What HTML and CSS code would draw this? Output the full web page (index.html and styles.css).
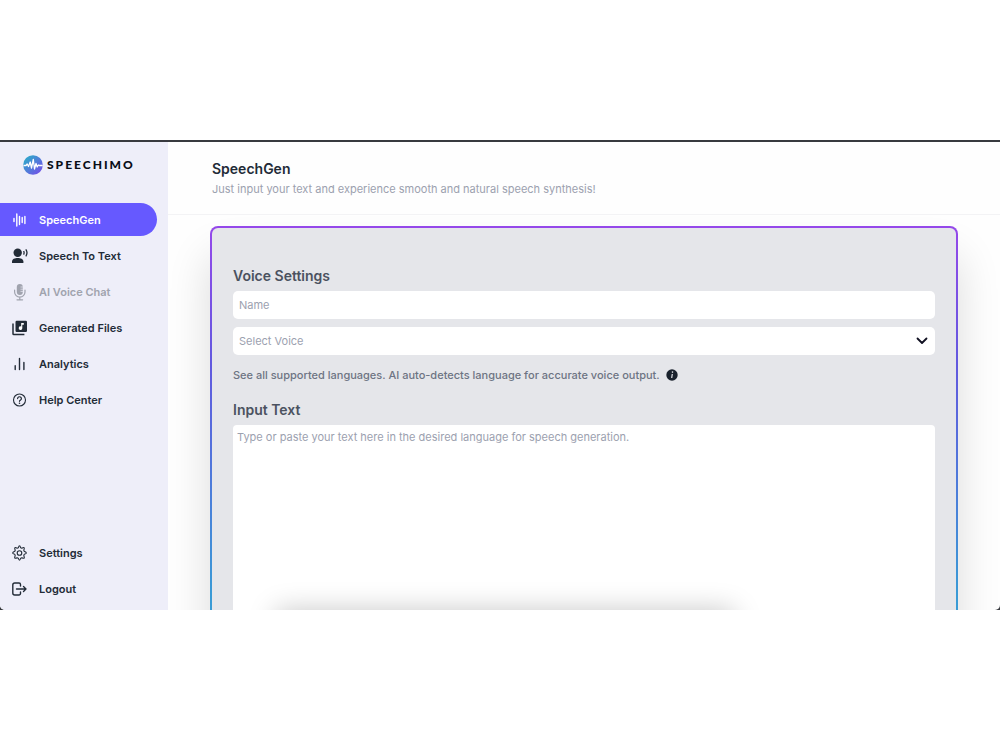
FILE: index.html
```
<!DOCTYPE html>
<html lang="en">
<head>
    <meta charset="utf-8">
    <title>Speechimo - SpeechGen</title>
    <link rel="stylesheet" href="styles.css">
</head>
<body>
<div class="window">
    <div class="app">
        <aside class="sidebar">
            <a class="logo" href="#">
                <svg width="20" height="20" viewBox="0 0 20 20">
                    <defs>
                        <linearGradient id="logo-fill" x1="0" y1="0" x2="1" y2="1">
                            <stop offset="0.2" stop-color="#35a0cd"/>
                            <stop offset="0.9" stop-color="#7250e8"/>
                        </linearGradient>
                    </defs>
                    <circle cx="10" cy="10" r="9.8" fill="url(#logo-fill)"/>
                    <path d="M0.5 10.5H3l1.200-1.500 1.300 2.500L7.200 7l1.300 6L10.300 4.500l1.200 9.500 1.500-5.500 1.200 3.500 1.200-2 .8.500h3.500" fill="none" stroke="#fff" stroke-width="1.300" stroke-linejoin="round"/>
                </svg>
                <span>SPEECHIMO</span>
            </a>
            <nav class="menu">
                <a class="item active" href="#">
                    <svg width="16" height="16" viewBox="0 0 16 16" fill="none" stroke="currentColor" stroke-width="1.4" stroke-linecap="round">
                        <path d="M2 6.500v3M4.800 2v12M7.500 4.500v8M10.200 5.500v5M12.900 4.500v7"/>
                    </svg>
                    SpeechGen
                </a>
                <a class="item" href="#">
                    <svg width="16" height="16" viewBox="0 0 16 16" fill="currentColor">
                        <circle cx="5.700" cy="4.700" r="4.200"/>
                        <path d="M0 15v-1.500c0-2.500 3-3.500 5.700-3.500s5.700 1 5.700 3.500V15z"/>
                        <path d="M11.600 3q1 1.800 0 3.600M13.800 1.300q2.400 3.500 0 7" fill="none" stroke="currentColor" stroke-width="1.300"/>
                    </svg>
                    Speech To Text
                </a>
                <a class="item disabled" href="#">
                    <svg width="16" height="18" viewBox="0 0 16 18">
                        <rect x="4.800" y="1" width="6" height="11" rx="3" fill="currentColor"/>
                        <path d="M8.500 4H11M8.500 6.200H11M8.500 8.400H11" stroke="#eeeef9" stroke-width=".7"/>
                        <path d="M2.600 7v2a5.200 5.200 0 0 0 10.400 0V7M7.800 14.200v2.600M5 16.800h5.600" fill="none" stroke="currentColor" stroke-width="1.200" stroke-linecap="round"/>
                    </svg>
                    AI Voice Chat
                </a>
                <a class="item" href="#">
                    <svg width="16" height="16" viewBox="0 0 16 16">
                        <rect x="3.500" y=".8" width="11.500" height="11.200" rx="1.200" fill="currentColor"/>
                        <path d="M1 3.500v10.200q0 .8.800.8h10.600" fill="none" stroke="currentColor" stroke-width="1.500"/>
                        <path d="M9.200 3h2.600v1.700h-1.500v3.500a1.800 1.800 0 1 1-1.100-1.700z" fill="#fff"/>
                    </svg>
                    Generated Files
                </a>
                <a class="item" href="#">
                    <svg width="16" height="16" viewBox="0 0 16 16" fill="none" stroke="currentColor" stroke-width="1.400" stroke-linecap="round">
                        <path d="M3.200 9.800v3.700M7.500 2.500v11M11.900 6.500v7"/>
                    </svg>
                    Analytics
                </a>
                <a class="item" href="#">
                    <svg width="16" height="16" viewBox="0 0 16 16" fill="none" stroke="currentColor">
                        <circle cx="7.500" cy="8" r="6" stroke-width="1.100"/>
                        <path d="M5.600 6.600a1.900 1.800 0 1 1 2.900 1.500q-1 .5-1 1.200" stroke-width="1.200" stroke-linecap="round"/>
                        <circle cx="7.500" cy="11.200" r=".8" fill="currentColor" stroke="none"/>
                    </svg>
                    Help Center
                </a>
            </nav>
            <nav class="menu menu-bottom">
                <a class="item" href="#">
                    <svg width="16" height="16" viewBox="0 0 16 16" fill="none" stroke="currentColor" stroke-width="1.100" stroke-linejoin="round">
                        <path d="M6.300 2.800Q7.500 -1.200 8.700 2.800L9.800 3.200Q13.400 1.200 11.800 5.200L12.200 6.300Q16.500 8 12.200 9.300L11.800 10.700Q13.600 14.300 9.800 12.700L8.700 13.200Q7.500 17.200 6.300 13.200L5.200 12.700Q1.400 14.300 3.200 10.700L2.800 9.300Q-1.500 8 2.800 6.300L3.200 5.200Q1.600 1.200 5.200 3.200z"/>
                        <circle cx="7.500" cy="8" r="2.300"/>
                    </svg>
                    Settings
                </a>
                <a class="item" href="#">
                    <svg width="16" height="16" viewBox="0 0 16 16" fill="none" stroke="currentColor" stroke-width="1.400" stroke-linejoin="round" stroke-linecap="round">
                        <path d="M8.500 5V3.500A1.500 1.500 0 0 0 7 2H2.700Q.8 2 .8 4v8q0 2 1.900 2H7a1.500 1.500 0 0 0 1.500-1.500V11M4.500 8H14M11.500 5.500L14 8l-2.500 2.500"/>
                    </svg>
                    Logout
                </a>
            </nav>
        </aside>
        <main class="content">
            <header class="page-header">
                <h1>SpeechGen</h1>
                <p>Just input your text and experience smooth and natural speech synthesis!</p>
            </header>
            <form class="card">
                <h2><label for="name">Voice Settings</label></h2>
                <input class="field" type="text" id="name" placeholder="Name">
                <div class="select">
                    <select class="field" aria-label="Select Voice">
                        <option>Select Voice</option>
                    </select>
                    <svg width="12" height="8" viewBox="0 0 12 8" fill="none" stroke="#111122" stroke-width="1.800" stroke-linecap="round" stroke-linejoin="round">
                        <path d="M1.500 1.500L6 6l4.500-4.500"/>
                    </svg>
                </div>
                <p class="hint">
                    See all supported languages. AI auto-detects language for accurate voice output.
                    <svg width="12" height="12" viewBox="0 0 12 12">
                        <circle cx="6" cy="6" r="5.700" fill="#1a222d"/>
                        <path d="M6.300 5L5.700 9" stroke="#e5e6ea" stroke-width="1.200"/>
                        <circle cx="6.500" cy="3.100" r=".8" fill="#e5e6ea"/>
                    </svg>
                </p>
                <h2><label for="text">Input Text</label></h2>
                <textarea id="text" placeholder="Type or paste your text here in the desired language for speech generation."></textarea>
            </form>
            <div class="player"></div>
        </main>
    </div>
</div>
</body>
</html>
```
FILE: styles.css
```
* {
    box-sizing: border-box;
}

body {
    margin: 0;
    padding: 140px 0;
    background: #fff;
    font-family: Inter, "Liberation Sans", sans-serif;
    font-size: 11px;
    line-height: 16px;
    color: #222b37;
}

h1, h2, p {
    margin: 0;
}

.window {
    height: calc(100vh - 280px);
    padding-top: 2px;
    background: #383a3f;
}

.app {
    display: flex;
    height: 100%;
    overflow: hidden;
    background: #fefefe;
    border-radius: 0 0 5px 5px;
}

/* sidebar */
.sidebar {
    display: flex;
    flex-direction: column;
    flex: 0 0 168px;
    padding: 13px 0 5px;
    background: #eeeef9;
}

.logo {
    display: flex;
    align-items: center;
    gap: 4px;
    padding-left: 23px;
    margin-bottom: 28px;
    color: #090d17;
    font-family: Lato, sans-serif;
    font-size: 12px;
    font-weight: 900;
    letter-spacing: 2px;
    text-decoration: none;
}

.menu {
    display: flex;
    flex-direction: column;
    gap: 3px;
    padding-right: 11px;
}

.menu-bottom {
    margin-top: auto;
}

.item {
    display: flex;
    align-items: center;
    gap: 11px;
    height: 33px;
    padding-left: 12px;
    border-radius: 0 17px 17px 0;
    color: #222b37;
    font-weight: 600;
    text-decoration: none;
}

.item svg {
    flex: none;
}

.item.active {
    background: #6659ff;
    color: #fff;
}

.item.disabled {
    color: #a0a3ae;
}

/* content */
.content {
    position: relative;
    flex: 1;
    min-width: 0;
    overflow: hidden;
}

.page-header {
    padding: 18px 44px 17px;
    border-bottom: 1px solid #f3f3f5;
}

.page-header h1 {
    font-size: 14px;
    line-height: 18px;
    font-weight: 600;
}

.page-header p {
    margin-top: 3px;
    color: #9ca1af;
    font-weight: 400;
}

.card {
    margin: 11px 42px 0;
    padding: 39px 21px;
    border: 2px solid transparent;
    border-radius: 8px;
    background: linear-gradient(#e5e6ea, #e5e6ea) padding-box,
                linear-gradient(#9548ea, #6259df 30%, #3a9ad6 80%, #36a3d2) border-box;
    box-shadow: 0 30px 44px rgba(0, 0, 0, 0.14);
}

.card h2 {
    color: #4b5260;
    font-size: 14px;
    line-height: 18px;
    font-weight: 600;
}

.field {
    display: block;
    width: 100%;
    height: 28px;
    margin-top: 6px;
    padding: 0 6px;
    border: 0;
    border-radius: 5px;
    background: #fff;
    color: #9ca1af;
    font-family: inherit;
    font-size: 11px;
}

.select {
    position: relative;
    margin-top: 8px;
}

.select .field {
    margin-top: 0;
    appearance: none;
}

.select svg {
    position: absolute;
    top: 10px;
    right: 7px;
    pointer-events: none;
}

.hint {
    display: flex;
    align-items: center;
    gap: 6px;
    margin: 12px 0 18px;
    color: #6d7483;
    font-weight: 500;
}

textarea {
    display: block;
    width: 100%;
    height: 220px;
    margin-top: 6px;
    padding: 4px;
    border: 0;
    border-radius: 4px;
    background: #fff;
    font-family: inherit;
    font-size: 11px;
    line-height: 16px;
    resize: none;
}

::placeholder {
    color: #9ca1af;
    opacity: 1;
}

/* docked just under the visible area, only its shadow shows */
.player {
    position: absolute;
    top: 100%;
    left: 13%;
    right: 32%;
    height: 60px;
    box-shadow: 0 0 28px rgba(0, 0, 0, 0.22);
}
```
